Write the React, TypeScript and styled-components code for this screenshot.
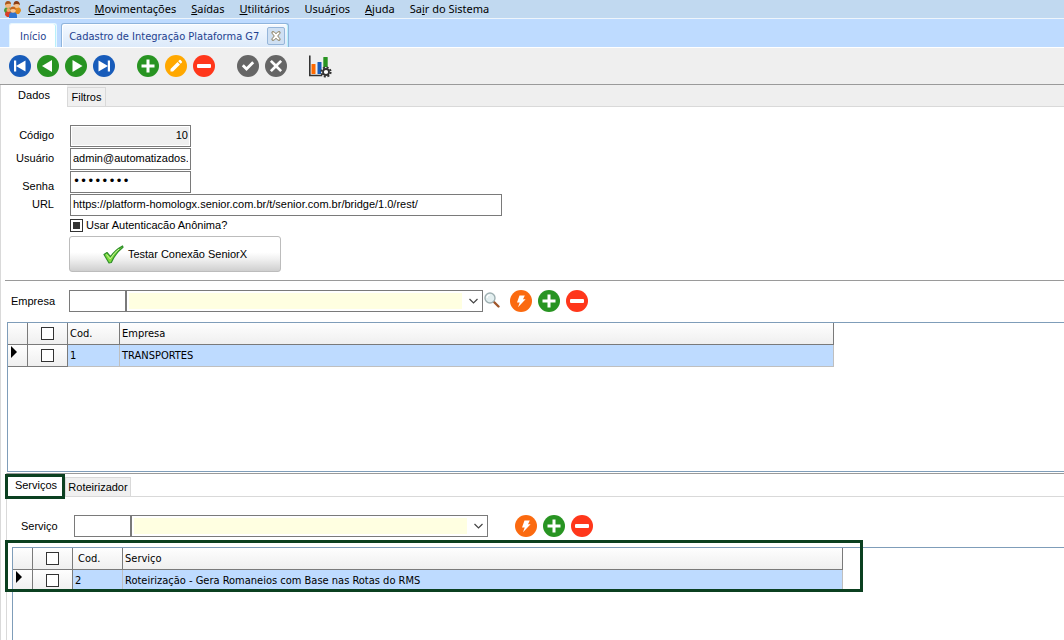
import React from "react";
import styled, { createGlobalStyle } from "styled-components";

const UI = `"Liberation Sans", Arial, sans-serif`;
const TAHOMA = `"DejaVu Sans Condensed", Tahoma, sans-serif`;

const GlobalStyle = createGlobalStyle`
  *, *::before, *::after { box-sizing: border-box; }
  body { margin: 0; background: #fff; color: #000; font: 11px/14px ${UI}; }
  button, input, select { font: inherit; color: inherit; margin: 0; border-radius: 0; }
  svg { display: block; flex: none; }
`;

const Window = styled.div`
  display: flex;
  flex-direction: column;
  min-height: 100vh;
`;

const MenuBar = styled.nav`
  display: flex;
  align-items: center;
  gap: 15px;
  height: 19px;
  padding: 0 4px;
  background: #c1d9f0;
  border-bottom: 1px solid #eef5fc;
`;

const MenuItem = styled.button`
  padding: 0;
  border: 0;
  background: none;
  font: 11px/16px "Noto Sans", "Segoe UI", sans-serif;
  white-space: nowrap;
`;

const MenuIcon = styled.span`
  margin-right: -8px;
`;

const Documents = styled.div`
  display: flex;
  align-items: flex-end;
  gap: 4px;
  height: 29px;
  padding: 0 9px;
  background: #bedbff;
  border-bottom: 1px solid #fff;
`;

const DocumentTab = styled.div<{ $current?: boolean }>`
  display: flex;
  align-items: center;
  gap: 8px;
  height: 24px;
  padding: 0 ${(p) => (p.$current ? 3 : 10)}px 0 ${(p) => (p.$current ? 7 : 10)}px;
  border: 1px solid ${(p) => (p.$current ? "#8fb4dc" : "#e8f8ff")};
  border-bottom: 0;
  border-radius: 3px 3px 0 0;
  background: ${(p) => (p.$current ? "linear-gradient(#f4f9ff, #dceafa)" : "#fff")};
  box-shadow: inset -1px 0 0 #b8f0fa, inset 1px 1px 0 #fff;
`;

const DocumentName = styled.button`
  padding: 3px 0 0;
  border: 0;
  background: none;
  color: #1e3f8f;
  font: 11px/16px ${TAHOMA};
  white-space: nowrap;
`;

const CloseButton = styled.button`
  display: grid;
  place-items: center;
  width: 18px;
  height: 18px;
  padding: 0;
  border: 1px solid #96b6da;
  border-radius: 2px;
  background: #cfe0f3;
`;

const Toolbar = styled.div`
  display: flex;
  align-items: center;
  gap: 22px;
  height: 37px;
  padding: 0 9px;
  background: #efefef;
  border-bottom: 1px solid #9a9a9a;
`;

const IconGroup = styled.div`
  display: flex;
  gap: 6px;
`;

const IconButton = styled.button`
  padding: 0;
  border: 0;
  background: none;
`;

const Page = styled.main`
  flex: 1;
  display: flex;
  flex-direction: column;
  border-left: 1px solid #d9d9d9;
`;

const TabStrip = styled.div<{ $plain?: boolean }>`
  display: flex;
  align-items: flex-end;
  height: ${(p) => (p.$plain ? 23 : 22)}px;
  background: ${(p) => (p.$plain ? "#fff" : "#efefef")};
  box-shadow: inset 0 -1px 0 #d9d9d9;
`;

const Tab = styled.button<{ $active?: boolean; $width: number }>`
  position: relative;
  align-self: ${(p) => (p.$active ? "stretch" : "flex-end")};
  width: ${(p) => p.$width}px;
  height: ${(p) => (p.$active ? "auto" : "20px")};
  padding: ${(p) => (p.$active ? "0 0 2px" : "0")};
  border: 1px solid ${(p) => (p.$active ? "#fff" : "#d9d9d9")};
  background: ${(p) => (p.$active ? "#fff" : "#f0f0f0")};
  white-space: nowrap;
`;

const Form = styled.form`
  display: grid;
  grid-template-columns: 53px minmax(0, 1fr);
  column-gap: 16px;
  row-gap: 1px;
  padding-top: 18px;
`;

const FieldLabel = styled.label<{ $low?: boolean }>`
  align-self: ${(p) => (p.$low ? "end" : "center")};
  padding-bottom: ${(p) => (p.$low ? 0 : 2)}px;
  text-align: right;
  white-space: nowrap;
`;

const TextBox = styled.input<{ $width: number }>`
  width: ${(p) => p.$width}px;
  height: 22px;
  padding: 0 2px 2px;
  border: 1px solid #7a7a7a;
  background: #fff;
  outline: none;
  &:disabled {
    background: #efefef;
    color: #000;
    text-align: right;
    box-shadow: inset 0 0 0 1px #fff;
  }
  &[type="password"] {
    font: 12px/14px "DejaVu Sans", sans-serif;
  }
`;

const CheckLine = styled.label`
  grid-column: 2;
  display: flex;
  align-items: center;
  gap: 3px;
  height: 16px;
`;

const Check = styled.input.attrs({ type: "checkbox" })`
  appearance: none;
  display: block;
  width: 13px;
  height: 13px;
  border: 1px solid #333;
  background: #fff;
  &:checked {
    padding: 2px;
    background: #333 content-box;
  }
`;

const TestButton = styled.button`
  grid-column: 2;
  display: flex;
  align-items: center;
  justify-content: center;
  gap: 4px;
  width: 212px;
  height: 36px;
  margin: 2px 0 0 -1px;
  border: 1px solid #bcbcbc;
  border-radius: 3px;
  background: linear-gradient(#fff 45%, #f0f0f0 65%, #cfcfcf);
`;

const Rule = styled.hr`
  width: calc(100% - 4px);
  height: 1px;
  margin: 8px 0 0 4px;
  border: 0;
  background: #9a9a9a;
`;

const Lookup = styled.div<{ $indent: number; $top: number }>`
  display: flex;
  align-items: center;
  padding: ${(p) => p.$top}px 0 10px ${(p) => p.$indent}px;
`;

const LookupLabel = styled.label<{ $width: number }>`
  width: ${(p) => p.$width}px;
  padding-bottom: 1px;
  white-space: nowrap;
`;

const Combo = styled.div`
  display: grid;
  grid-template-columns: 1fr 18px;
  align-items: center;
  width: 357px;
  height: 22px;
  padding: 2px;
  border: 1px solid #7a7a7a;
`;

const ComboSelect = styled.select`
  grid-area: 1 / 1 / 2 / 3;
  appearance: none;
  width: 100%;
  height: 16px;
  padding: 0;
  border: 0;
  background: linear-gradient(90deg, #ffffe1 calc(100% - 18px), #fff calc(100% - 18px));
  outline: none;
`;

const Chevron = styled.svg`
  grid-area: 1 / 2;
  justify-self: end;
  margin-right: 2px;
  pointer-events: none;
`;

const LookupSearch = styled.span`
  width: 27px;
  padding-left: 1px;
`;

const Grid = styled.div<{ $fill?: boolean }>`
  position: relative;
  flex: ${(p) => (p.$fill ? "1" : "none")};
  min-height: ${(p) => (p.$fill ? 93 : 150)}px;
  margin-left: ${(p) => (p.$fill ? 5 : 6)}px;
  border: solid #7f9db9;
  border-width: ${(p) => (p.$fill ? "1px 0 0 1px" : "1px 0 1px 1px")};
`;

const Table = styled.table`
  table-layout: fixed;
  width: 0;
  border-spacing: 0;
  font: 11px/16px ${TAHOMA};
`;

const HeadCell = styled.th<{ $pad?: number }>`
  height: 22px;
  padding: 0 ${(p) => p.$pad ?? 2}px;
  border: solid #7a7a7a;
  border-width: 0 1px 1px 0;
  background: linear-gradient(#fefefe, #efefef);
  font-weight: normal;
  text-align: left;
`;

const Indicator = styled(HeadCell).attrs({ as: "td" })`
  vertical-align: top;
`;

const Cell = styled.td`
  height: 22px;
  padding: 0 2px;
  border: solid #bfbfbf;
  border-width: 0 1px 1px 0;
  background: #bedbff;
`;

const CheckBoxCenter = styled.div`
  display: grid;
  place-items: center;
`;

const Services = styled.section`
  flex: 1;
  display: flex;
  flex-direction: column;
  margin: 1px 0 0 5px;
  border-top: 1px solid #9a9a9a;
  border-left: 1px solid #d9d9d9;
`;

const TabHighlight = styled.span`
  position: absolute;
  inset: -1px auto auto -3px;
  width: 60px;
  height: 25px;
  border: 3px solid #0b4020;
`;

const GridHighlight = styled.div`
  position: absolute;
  top: -8px;
  left: -8px;
  width: 858px;
  height: 52px;
  border: 3px solid #0b4020;
  pointer-events: none;
`;

type IconName = "first" | "prev" | "next" | "last" | "add" | "edit" | "remove" | "confirm" | "cancel" | "run";

const discs: Record<IconName, string> = {
  first: "#185cba",
  prev: "#289422",
  next: "#289422",
  last: "#185cba",
  add: "#289422",
  edit: "#ffa800",
  remove: "#ff371b",
  confirm: "#666",
  cancel: "#666",
  run: "#fb6a10",
};

const glyphs: Record<IconName, React.ReactNode> = {
  first: (
    <>
      <rect x="5" y="5.500" width="2.200" height="11" />
      <path d="M7 11l9.500-5.500v11z" />
    </>
  ),
  prev: <path d="M5 11 15 5v12z" />,
  next: <path d="M17.500 11 7.500 5v12z" />,
  last: (
    <>
      <rect x="14.800" y="5.500" width="2.200" height="11" />
      <path d="M15 11 5.500 5.500v11z" />
    </>
  ),
  add: <path d="M9.500 4.500h3v5H17.500v3h-5v5h-3v-5h-5v-3h5z" />,
  edit: <path d="M5.500 16.500V14l7-7 2.500 2.500-7 7zM13.200 6.300l1.200-1.200q.6-.5 1.200 0l1.300 1.300q.5.6 0 1.200l-1.200 1.200z" />,
  remove: <rect x="4" y="9" width="14" height="4" rx="1" />,
  confirm: <path d="m4.800 11.300 2-2 2.700 2.700 5.700-5.700 2 2-7.700 7.700z" />,
  cancel: <path d="m6.800 4.900 4.200 4.200 4.200-4.200 1.900 1.900-4.200 4.200 4.200 4.200-1.900 1.900-4.200-4.200-4.200 4.200-1.900-1.900 4.200-4.200-4.200-4.200z" />,
  run: <path d="M9.500 5.500h5.300l-1.800 3.700h2.600L8 17.300l1.700-4.800H7z" />,
};

const Disc = ({ name, label }: { name: IconName; label: string }) => (
  <IconButton type="button" aria-label={label}>
    <svg width="22" height="22" viewBox="0 0 22 22" fill="#fff">
      <circle cx="11" cy="11" r="11" fill={discs[name]} />
      {glyphs[name]}
    </svg>
  </IconButton>
);

const PeopleIcon = () => (
  <svg width="17" height="17" viewBox="0 0 17 17">
    <path d="M0 10q0-4 4-4t4 4v3H2z" fill="#4d9a36" />
    <circle cx="4" cy="4" r="3" fill="#f3b57a" />
    <path d="M1 4q0-4 3-4t3 3q-3-1-6 1z" fill="#a8571c" />
    <path d="M9 9q0-3 4-3t4 4l-2 3H9z" fill="#e08a1c" />
    <circle cx="12.500" cy="4" r="3" fill="#f6c28c" />
    <path d="M9.500 4q0-4 3-4t3.500 4q-3-2-6.500 0z" fill="#8a3d14" />
    <path d="M1 14q0-4 3.500-4T8 14l-2 2H3z" fill="#d8402a" />
    <circle cx="4.500" cy="9" r="2" fill="#f0a468" />
    <path d="M5 17v-2q0-4 4-4t4 4v2z" fill="#2f74d0" />
    <circle cx="9" cy="9" r="2.800" fill="#fac58f" />
    <path d="M6 9q0-3.500 3-3.500T12 9Q9 7 6 9z" fill="#c4641c" />
  </svg>
);

const ChartIcon = () => (
  <svg width="23" height="24" viewBox="0 0 23 24">
    <path d="M.8 1.500v20h12.500" fill="none" stroke="#333" strokeWidth="1.600" />
    <rect x="2.500" y="10" width="4" height="10" rx=".5" fill="#ff6a00" />
    <rect x="8.500" y="8" width="4" height="12" rx=".5" fill="#185cba" />
    <rect x="14.300" y="3" width="4.400" height="11" rx=".5" fill="#289422" />
    <circle cx="17" cy="18" r="5" fill="#efefef" />
    <circle cx="17" cy="18" r="4.600" fill="none" stroke="#333" strokeWidth="2" strokeDasharray="2 1.613" />
    <circle cx="17" cy="18" r="3" fill="#fff" stroke="#333" strokeWidth="1.800" />
  </svg>
);

const SearchIcon = () => (
  <svg width="16" height="16" viewBox="0 0 16 16">
    <path d="m10 10 4.500 4.500" stroke="#a0562a" strokeWidth="2.400" strokeLinecap="round" />
    <circle cx="6" cy="6" r="5" fill="#e3eff0" stroke="#9fb0b2" strokeWidth="1.400" />
    <path d="M3 6q0-3 3-3" fill="none" stroke="#fff" strokeWidth="1.200" />
  </svg>
);

const TickIcon = () => (
  <svg width="21" height="19" viewBox="0 0 21 19">
    <path
      d="M1 9.500 4 7.500l3.500 4.200Q12 5 19.500 1l.5 1.200Q12.500 8 8.300 17.500L6 18z"
      fill="#7fdc3c"
      stroke="#2f8f2a"
      strokeWidth="1.200"
      strokeLinejoin="round"
    />
    <path d="M3.500 9.500 7.200 14Q11 7.500 16 4" fill="none" stroke="#c8f59a" strokeWidth="1" />
  </svg>
);

const CloseIcon = () => (
  <svg width="10" height="10" viewBox="0 0 10 10">
    <path
      d="M1 .8h2.200L5 2.800 6.800.8H9v1.400L6.700 5 9 7.800v1.400H6.800L5 7.200l-1.800 2H1V7.800L3.300 5 1 2.200z"
      fill="#fff"
      stroke="#8a7f60"
      strokeWidth="1"
    />
  </svg>
);

const RowArrow = () => (
  <svg width="8" height="13" viewBox="0 0 8 13">
    <path d="M1 1l6 6-6 6z" />
  </svg>
);

const menu: [string, string, string][] = [
  ["", "C", "adastros"],
  ["", "M", "ovimentações"],
  ["", "S", "aídas"],
  ["", "U", "tilitários"],
  ["Usuá", "r", "ios"],
  ["", "A", "juda"],
  ["Sa", "i", "r do Sistema"],
];

const LookupFields = ({ id, label }: { id: string; label: string }) => (
  <>
    <TextBox id={id} $width={57} />
    <Combo>
      <ComboSelect aria-label={label}>
        <option value=""></option>
      </ComboSelect>
      <Chevron width="9" height="6" viewBox="0 0 9 6">
        <path d="M.5 1l4 4 4-4" fill="none" stroke="#444" strokeWidth="1.200" />
      </Chevron>
    </Combo>
  </>
);

const LookupActions = () => (
  <IconGroup>
    <Disc name="run" label="Executar" />
    <Disc name="add" label="Adicionar" />
    <Disc name="remove" label="Remover" />
  </IconGroup>
);

type DataGridProps = { widths: number[]; title: string; code: string; name: string; codePad?: number };

const DataGrid = ({ widths, title, code, name, codePad }: DataGridProps) => (
  <Table>
    <colgroup>
      {widths.map((width, i) => (
        <col key={i} width={width} />
      ))}
    </colgroup>
    <thead>
      <tr>
        <HeadCell />
        <HeadCell>
          <CheckBoxCenter>
            <Check aria-label="Selecionar todos" />
          </CheckBoxCenter>
        </HeadCell>
        <HeadCell $pad={codePad}>Cod.</HeadCell>
        <HeadCell>{title}</HeadCell>
      </tr>
    </thead>
    <tbody>
      <tr>
        <Indicator>
          <RowArrow />
        </Indicator>
        <HeadCell as="td">
          <CheckBoxCenter>
            <Check aria-label={`Selecionar ${name}`} />
          </CheckBoxCenter>
        </HeadCell>
        <Cell>{code}</Cell>
        <Cell>{name}</Cell>
      </tr>
    </tbody>
  </Table>
);

export default function App() {
  return (
    <Window>
      <GlobalStyle />
      <MenuBar>
        <MenuIcon>
          <PeopleIcon />
        </MenuIcon>
        {menu.map(([before, key, after]) => (
          <MenuItem key={before + key + after} type="button">
            {before}
            <u>{key}</u>
            {after}
          </MenuItem>
        ))}
      </MenuBar>

      <Documents>
        <DocumentTab>
          <DocumentName type="button">Início</DocumentName>
        </DocumentTab>
        <DocumentTab $current>
          <DocumentName type="button">Cadastro de Integração Plataforma G7</DocumentName>
          <CloseButton type="button" aria-label="Fechar">
            <CloseIcon />
          </CloseButton>
        </DocumentTab>
      </Documents>

      <Toolbar>
        <IconGroup>
          <Disc name="first" label="Primeiro" />
          <Disc name="prev" label="Anterior" />
          <Disc name="next" label="Próximo" />
          <Disc name="last" label="Último" />
        </IconGroup>
        <IconGroup>
          <Disc name="add" label="Inserir" />
          <Disc name="edit" label="Editar" />
          <Disc name="remove" label="Excluir" />
        </IconGroup>
        <IconGroup>
          <Disc name="confirm" label="Confirmar" />
          <Disc name="cancel" label="Cancelar" />
        </IconGroup>
        <IconButton type="button" aria-label="Relatórios">
          <ChartIcon />
        </IconButton>
      </Toolbar>

      <Page>
        <TabStrip>
          <Tab type="button" $active $width={66}>
            Dados
          </Tab>
          <Tab type="button" $width={39}>
            Filtros
          </Tab>
        </TabStrip>

        <Form>
          <FieldLabel htmlFor="codigo">Código</FieldLabel>
          <TextBox id="codigo" $width={121} defaultValue="10" disabled />
          <FieldLabel htmlFor="usuario">Usuário</FieldLabel>
          <TextBox id="usuario" $width={121} defaultValue="admin@automatizados.com" />
          <FieldLabel htmlFor="senha" $low>
            Senha
          </FieldLabel>
          <TextBox id="senha" type="password" $width={121} defaultValue="senha123" />
          <FieldLabel htmlFor="url">URL</FieldLabel>
          <TextBox
            id="url"
            $width={432}
            defaultValue="https://platform-homologx.senior.com.br/t/senior.com.br/bridge/1.0/rest/"
          />
          <CheckLine>
            <Check defaultChecked />
            Usar Autenticacão Anônima?
          </CheckLine>
          <TestButton type="button">
            <TickIcon />
            Testar Conexão SeniorX
          </TestButton>
        </Form>

        <Rule />

        <Lookup $indent={10} $top={9}>
          <LookupLabel $width={58} htmlFor="empresa">
            Empresa
          </LookupLabel>
          <LookupFields id="empresa" label="Nome da empresa" />
          <LookupSearch>
            <IconButton type="button" aria-label="Pesquisar">
              <SearchIcon />
            </IconButton>
          </LookupSearch>
          <LookupActions />
        </Lookup>

        <Grid>
          <DataGrid widths={[20, 40, 52, 714]} title="Empresa" code="1" name="TRANSPORTES" />
        </Grid>

        <Services>
          <TabStrip $plain>
            <Tab type="button" $active $width={58}>
              Serviços
              <TabHighlight />
            </Tab>
            <Tab type="button" $width={66}>
              Roteirizador
            </Tab>
          </TabStrip>

          <Lookup $indent={14} $top={18}>
            <LookupLabel $width={53} htmlFor="servico">
              Serviço
            </LookupLabel>
            <LookupFields id="servico" label="Nome do serviço" />
            <LookupSearch />
            <LookupActions />
          </Lookup>

          <Grid $fill>
            <DataGrid
              widths={[20, 40, 50, 720]}
              title="Serviço"
              code="2"
              name="Roteirização - Gera Romaneios com Base nas Rotas do RMS"
              codePad={5}
            />
            <GridHighlight />
          </Grid>
        </Services>
      </Page>
    </Window>
  );
}
